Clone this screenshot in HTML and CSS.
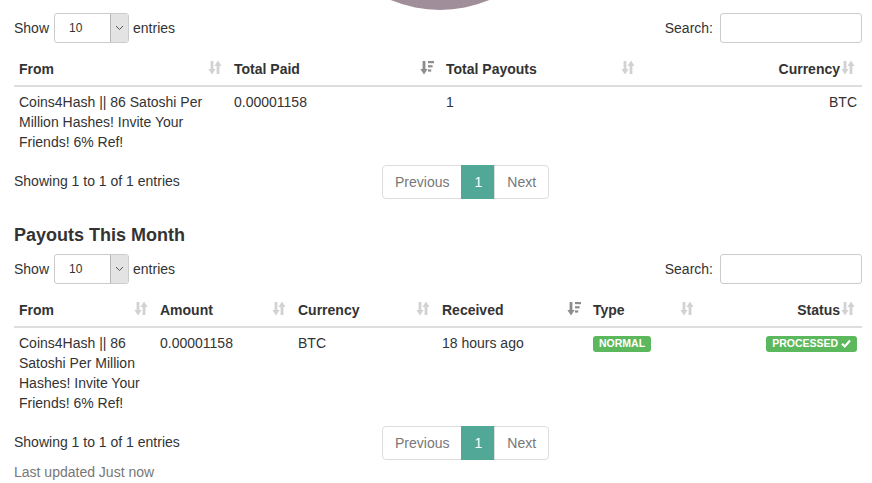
FILE: index.html
```html
<!DOCTYPE html>
<html lang="en">
<head>
    <meta charset="UTF-8">
    <meta name="viewport" content="width=device-width, initial-scale=1.0">
    <title>Payouts</title>
    <link rel="stylesheet" href="styles.css">
</head>
<body>

<div class="avatar-clip">
    <div class="avatar"></div>
</div>

<div class="container">

    <!-- Payouts by faucet -->
    <div class="dt-wrapper">
        <div class="dt-top">
            <label class="dt-length">Show
                <span class="select-wrap">
                    <select class="select-sm"><option>10</option><option>25</option><option>50</option></select>
                    <span class="select-arrow"><svg width="9" height="6" viewBox="0 0 9 6"><path d="M1 1 L4.5 4.5 L8 1" fill="none" stroke="#555" stroke-width="1"/></svg></span>
                </span>
                entries</label>
            <label class="dt-search">Search: <input type="search" class="input-sm"></label>
        </div>

        <table class="data-table">
            <thead>
                <tr>
                    <th class="w-from1">From<span class="sort-icon"><svg width="14" height="15" viewBox="0 0 14 15"><path d="M4 1 V10" stroke="currentColor" stroke-width="2.8"/><path d="M0.4 9 H7.6 L4 14.5 Z" fill="currentColor"/><path d="M10 5 V14" stroke="currentColor" stroke-width="2.8"/><path d="M6.4 6 H13.6 L10 0.5 Z" fill="currentColor"/></svg></span></th>
                    <th class="w-paid">Total Paid<span class="sort-icon sorted"><svg width="14" height="15" viewBox="0 0 14 15"><path d="M4 1 V10" stroke="currentColor" stroke-width="2.8"/><path d="M0.4 9 H7.6 L4 14.5 Z" fill="currentColor"/><rect x="8" y="1" width="6" height="2.2" fill="currentColor"/><rect x="8" y="5.2" width="4.6" height="2.2" fill="currentColor"/><rect x="8" y="9.4" width="3.2" height="2.2" fill="currentColor"/></svg></span></th>
                    <th class="w-payouts">Total Payouts<span class="sort-icon"><svg width="14" height="15" viewBox="0 0 14 15"><path d="M4 1 V10" stroke="currentColor" stroke-width="2.8"/><path d="M0.4 9 H7.6 L4 14.5 Z" fill="currentColor"/><path d="M10 5 V14" stroke="currentColor" stroke-width="2.8"/><path d="M6.4 6 H13.6 L10 0.5 Z" fill="currentColor"/></svg></span></th>
                    <th class="align-right">Currency<span class="sort-icon"><svg width="14" height="15" viewBox="0 0 14 15"><path d="M4 1 V10" stroke="currentColor" stroke-width="2.8"/><path d="M0.4 9 H7.6 L4 14.5 Z" fill="currentColor"/><path d="M10 5 V14" stroke="currentColor" stroke-width="2.8"/><path d="M6.4 6 H13.6 L10 0.5 Z" fill="currentColor"/></svg></span></th>
                </tr>
            </thead>
            <tbody>
                <tr>
                    <td>Coins4Hash || 86 Satoshi Per Million Hashes! Invite Your Friends! 6% Ref!</td>
                    <td>0.00001158</td>
                    <td>1</td>
                    <td class="align-right">BTC</td>
                </tr>
            </tbody>
        </table>

        <div class="dt-bottom">
            <div class="dt-info">Showing 1 to 1 of 1 entries</div>
            <ul class="pagination">
                <li class="disabled"><a href="#">Previous</a></li>
                <li class="active"><a href="#">1</a></li>
                <li class="disabled"><a href="#">Next</a></li>
            </ul>
        </div>
    </div>

    <!-- Payouts this month -->
    <h4 class="section-title">Payouts This Month</h4>

    <div class="dt-wrapper">
        <div class="dt-top">
            <label class="dt-length">Show
                <span class="select-wrap">
                    <select class="select-sm"><option>10</option><option>25</option><option>50</option></select>
                    <span class="select-arrow"><svg width="9" height="6" viewBox="0 0 9 6"><path d="M1 1 L4.5 4.5 L8 1" fill="none" stroke="#555" stroke-width="1"/></svg></span>
                </span>
                entries</label>
            <label class="dt-search">Search: <input type="search" class="input-sm"></label>
        </div>

        <table class="data-table">
            <thead>
                <tr>
                    <th class="w-from2">From<span class="sort-icon"><svg width="14" height="15" viewBox="0 0 14 15"><path d="M4 1 V10" stroke="currentColor" stroke-width="2.8"/><path d="M0.4 9 H7.6 L4 14.5 Z" fill="currentColor"/><path d="M10 5 V14" stroke="currentColor" stroke-width="2.8"/><path d="M6.4 6 H13.6 L10 0.5 Z" fill="currentColor"/></svg></span></th>
                    <th class="w-amount">Amount<span class="sort-icon"><svg width="14" height="15" viewBox="0 0 14 15"><path d="M4 1 V10" stroke="currentColor" stroke-width="2.8"/><path d="M0.4 9 H7.6 L4 14.5 Z" fill="currentColor"/><path d="M10 5 V14" stroke="currentColor" stroke-width="2.8"/><path d="M6.4 6 H13.6 L10 0.5 Z" fill="currentColor"/></svg></span></th>
                    <th class="w-currency">Currency<span class="sort-icon"><svg width="14" height="15" viewBox="0 0 14 15"><path d="M4 1 V10" stroke="currentColor" stroke-width="2.8"/><path d="M0.4 9 H7.6 L4 14.5 Z" fill="currentColor"/><path d="M10 5 V14" stroke="currentColor" stroke-width="2.8"/><path d="M6.4 6 H13.6 L10 0.5 Z" fill="currentColor"/></svg></span></th>
                    <th class="w-received">Received<span class="sort-icon sorted"><svg width="14" height="15" viewBox="0 0 14 15"><path d="M4 1 V10" stroke="currentColor" stroke-width="2.8"/><path d="M0.4 9 H7.6 L4 14.5 Z" fill="currentColor"/><rect x="8" y="1" width="6" height="2.2" fill="currentColor"/><rect x="8" y="5.2" width="4.6" height="2.2" fill="currentColor"/><rect x="8" y="9.4" width="3.2" height="2.2" fill="currentColor"/></svg></span></th>
                    <th class="w-type">Type<span class="sort-icon"><svg width="14" height="15" viewBox="0 0 14 15"><path d="M4 1 V10" stroke="currentColor" stroke-width="2.8"/><path d="M0.4 9 H7.6 L4 14.5 Z" fill="currentColor"/><path d="M10 5 V14" stroke="currentColor" stroke-width="2.8"/><path d="M6.4 6 H13.6 L10 0.5 Z" fill="currentColor"/></svg></span></th>
                    <th class="align-right">Status<span class="sort-icon"><svg width="14" height="15" viewBox="0 0 14 15"><path d="M4 1 V10" stroke="currentColor" stroke-width="2.8"/><path d="M0.4 9 H7.6 L4 14.5 Z" fill="currentColor"/><path d="M10 5 V14" stroke="currentColor" stroke-width="2.8"/><path d="M6.4 6 H13.6 L10 0.5 Z" fill="currentColor"/></svg></span></th>
                </tr>
            </thead>
            <tbody>
                <tr>
                    <td>Coins4Hash || 86 Satoshi Per Million Hashes! Invite Your Friends! 6% Ref!</td>
                    <td>0.00001158</td>
                    <td>BTC</td>
                    <td>18 hours ago</td>
                    <td><span class="label label-success">NORMAL</span></td>
                    <td class="align-right"><span class="label label-success">PROCESSED <svg class="check" width="10" height="9" viewBox="0 0 10 9"><path d="M1 4.8 L3.8 7.4 L9 1.6" fill="none" stroke="#fff" stroke-width="2.2"/></svg></span></td>
                </tr>
            </tbody>
        </table>

        <div class="dt-bottom">
            <div class="dt-info">Showing 1 to 1 of 1 entries</div>
            <ul class="pagination">
                <li class="disabled"><a href="#">Previous</a></li>
                <li class="active"><a href="#">1</a></li>
                <li class="disabled"><a href="#">Next</a></li>
            </ul>
        </div>
    </div>

    <p class="text-muted">Last updated Just now</p>
</div>

</body>
</html>
```

FILE: styles.css
```css
body {
    font-family: "Liberation Sans", Arial, sans-serif;
    font-size: 14px;
    line-height: 20px;
    color: #333;
    background-color: #fff;
    margin: 0;
}

.avatar-clip {
    height: 10px;
    overflow: hidden;
    display: flex;
    justify-content: center;
}

.avatar {
    flex: none;
    width: 254px;
    height: 254px;
    margin-top: -244px;
    margin-left: 8px;
    border-radius: 50%;
    background-color: #a08f9b;
}

.container {
    padding: 0 10px 0 14px;
}

.dt-top {
    display: flex;
    justify-content: space-between;
    align-items: center;
    margin-top: 3px;
}

.dt-top label {
    font-weight: normal;
    display: flex;
    align-items: center;
    line-height: 18px;
}

.select-wrap {
    position: relative;
    display: inline-block;
    margin: 0 4px 0 5px;
}

.select-sm {
    appearance: none;
    -webkit-appearance: none;
    width: 75px;
    height: 30px;
    padding: 0 14px;
    font-family: inherit;
    font-size: 12px;
    color: #333;
    background-color: #fff;
    border: 1px solid #ccc;
    border-radius: 3px;
    outline: none;
    display: block;
}

.select-arrow {
    position: absolute;
    top: 1px;
    right: 1px;
    bottom: 1px;
    width: 17px;
    background-color: #e3e3e3;
    border-left: 1px solid #b5b5b5;
    border-radius: 0 2px 2px 0;
    display: flex;
    align-items: center;
    justify-content: center;
}

.input-sm {
    width: 142px;
    height: 30px;
    box-sizing: border-box;
    margin-left: 7px;
    padding: 5px 10px;
    font-size: 12px;
    border: 1px solid #ccc;
    border-radius: 3px;
    outline: none;
}

.data-table {
    width: 100%;
    border-collapse: collapse;
    table-layout: fixed;
    margin: 6px 0;
}

.data-table th {
    position: relative;
    text-align: left;
    font-weight: bold;
    padding: 10px 30px 6px 5px;
    border-bottom: 2px solid #ddd;
    white-space: nowrap;
}

.data-table td {
    padding: 5px;
    vertical-align: top;
}

.data-table th.align-right {
    text-align: right;
    padding-right: 22px;
}

.data-table td.align-right {
    text-align: right;
}

.sort-icon {
    position: absolute;
    right: 7px;
    top: 11px;
    width: 14px;
    height: 15px;
    color: #d2d2d2;
    line-height: 0;
}

.sort-icon.sorted {
    color: #8c8c8c;
}

/* widths below are content widths: th padding (35px) is added on top */
.w-from1 { width: 180px; }
.w-paid { width: 177px; }
.w-payouts { width: 166px; }

.w-from2 { width: 106px; }
.w-amount { width: 103px; }
.w-currency { width: 109px; }
.w-received { width: 116px; }
.w-type { width: 78px; }

.label {
    display: inline-block;
    padding: 2px 6px 3px;
    font-size: 10.5px;
    font-weight: bold;
    line-height: 1;
    color: #fff;
    border-radius: 3px;
    vertical-align: 1px;
}

.label-success {
    background-color: #5cb85c;
}

.check {
    vertical-align: -1px;
}

.dt-bottom {
    display: grid;
    grid-template-columns: 368px 1fr;
}

.dt-info {
    padding-top: 8px;
}

.pagination {
    display: flex;
    list-style: none;
    margin: 2px 0;
    padding: 0;
}

.pagination li a {
    display: block;
    padding: 6px 12px;
    margin-left: -1px;
    border: 1px solid #ddd;
    color: #777;
    text-decoration: none;
}

.pagination li:first-child a {
    margin-left: 0;
    border-radius: 4px 0 0 4px;
}

.pagination li:last-child a {
    border-radius: 0 4px 4px 0;
}

.pagination li.active a {
    background-color: #52a897;
    border-color: #52a897;
    color: #fff;
}

.section-title {
    font-size: 18px;
    font-weight: bold;
    line-height: 20px;
    margin: 24px 0 9px;
}

.text-muted {
    color: #777;
    margin: 0;
}
```
